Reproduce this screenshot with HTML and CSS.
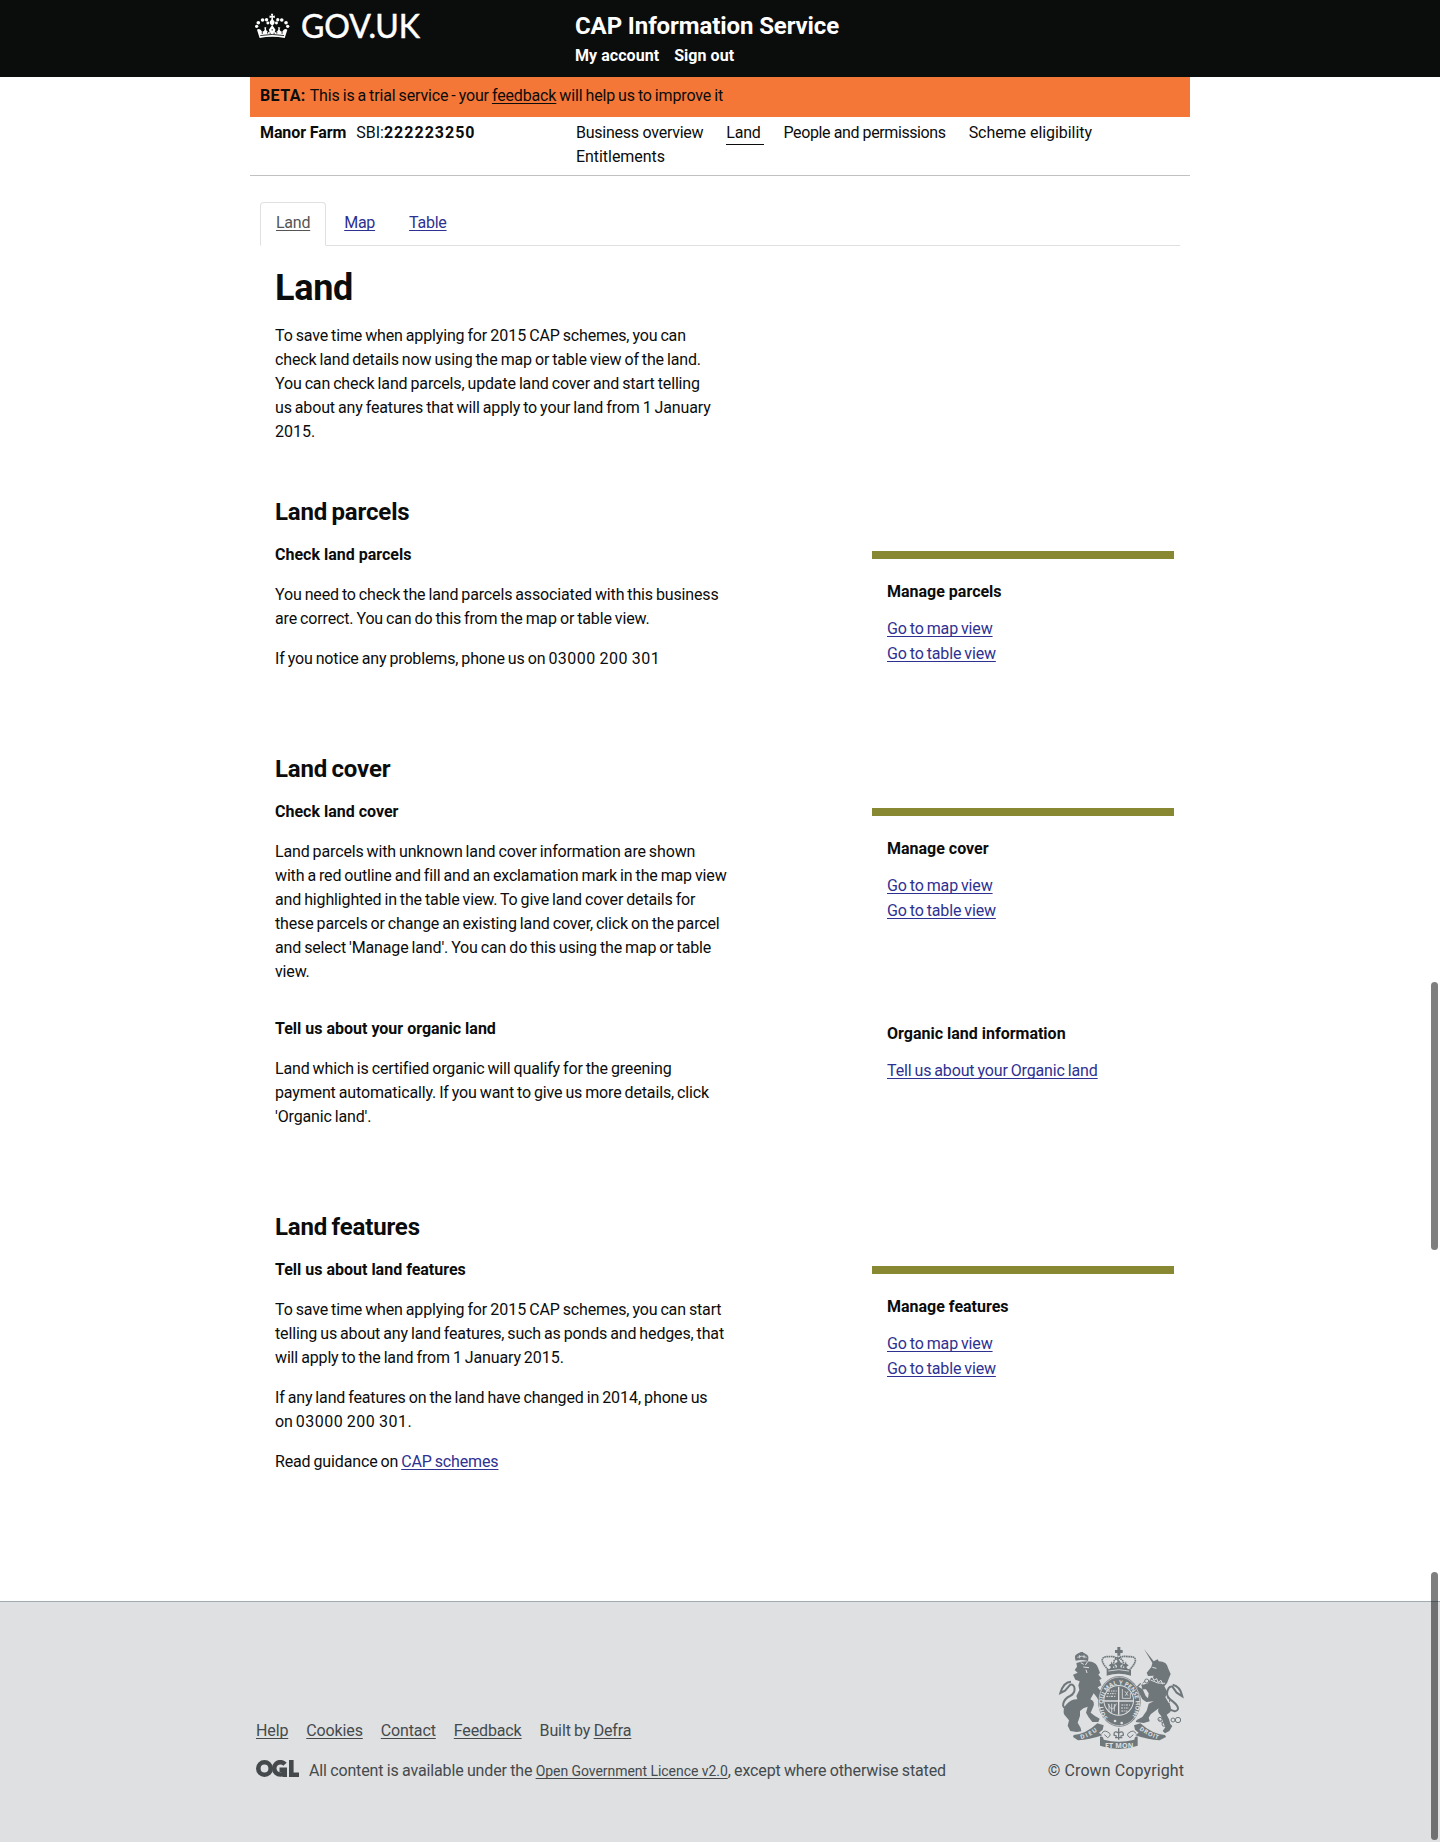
FILE: index.html
```html
<!DOCTYPE html>
<html lang="en">
<head>
<meta charset="utf-8">
<title>Land - CAP Information Service</title>
<link rel="stylesheet" href="styles.css">
</head>
<body>
<header class="top">
  <div class="top-inner">
    <a class="brand" href="#">
      <svg class="crown" viewBox="46 40 106 78" aria-hidden="true">
        <g fill="#fff">
          <path d="M52 90 Q60 84 66 94 Q72 100 76 88 L73 84 L80 82 L79 88 Q82 100 90 97 L88 90 L92 84 L98 76 L104 84 L108 90 L106 97 Q114 100 117 88 L116 82 L123 84 L120 88 Q124 100 130 94 Q136 84 144 90 L136 115 Q98 108 60 115Z"/>
          <path d="M94 42 h7 l-1 7 6 -2 v8 l-6 -2 1 8 q7 4 3 12 l-6 5 -6 -5 q-4 -8 3 -12 l1 -8 -6 2 v-8 l6 2z"/>
          <circle cx="81" cy="60" r="5"/><circle cx="69" cy="61" r="5.500"/><circle cx="56" cy="69" r="5.500"/><circle cx="51" cy="80" r="5"/><circle cx="85" cy="70" r="4.500"/>
          <circle cx="115" cy="60" r="5"/><circle cx="127" cy="61" r="5.500"/><circle cx="140" cy="69" r="5.500"/><circle cx="145" cy="80" r="5"/><circle cx="111" cy="70" r="4.500"/>
        </g>
        <g fill="none" stroke="#0b0c0c" stroke-width="2.500">
          <path d="M62 108 Q98 101 134 108"/><path d="M68 95 v8 M84 97 v5 M98 88 v5 M112 97 v5 M128 95 v8 M90 101 h4 M102 101 h4"/>
        </g>
      </svg>
      <svg class="wordmark" viewBox="0 0 120 28" aria-label="GOV.UK"><text x="0" y="25" textLength="119">GOV.UK</text></svg>
    </a>
    <div class="service">
      <div class="service-name">CAP Information Service</div>
      <nav class="account"><a href="#">My account</a><a href="#">Sign out</a></nav>
    </div>
  </div>
</header>

<div class="wrap">
  <div class="beta"><b>BETA:</b> <span>This is a trial service - your <a href="#">feedback</a> will help us to improve it</span></div>
  <div class="business">
    <div class="who"><b class="farm">Manor Farm</b><span class="sbi">SBI:<b>222223250</b></span></div>
    <nav class="sections">
      <a href="#">Business overview</a><a href="#" class="current">Land</a><a href="#" class="people">People and permissions</a><a href="#" class="wide">Scheme eligibility</a><a href="#" class="wide">Entitlements</a>
    </nav>
  </div>

  <nav class="tabs"><a class="tab active" href="#">Land</a><a class="tab" href="#">Map</a><a class="tab" href="#">Table</a></nav>

  <main class="content">
    <h1>Land</h1>
    <p>To save time when applying for <span class="year">2015</span> CAP schemes, you can<br>check land details now using the map or table view of the land.<br>You can check land parcels, update land cover and start telling<br>us about any features that will apply to your land from 1 January<br><span class="year">2015.</span></p>

    <section class="topic first">
      <h2>Land parcels</h2>
      <div class="cols">
        <div class="copy">
          <h3>Check land parcels</h3>
          <p>You need to check the land parcels associated with this business<br>are correct. You can do this from the map or table view.</p>
          <p>If you notice any problems, phone us on <span class="phone">03000 200 301</span></p>
        </div>
        <aside class="side">
          <h4>Manage parcels</h4>
          <ul><li><a href="#">Go to map view</a></li><li><a href="#">Go to table view</a></li></ul>
        </aside>
      </div>
    </section>

    <section class="topic">
      <h2>Land cover</h2>
      <div class="cols">
        <div class="copy">
          <h3>Check land cover</h3>
          <p>Land parcels with unknown land cover information are shown<br>with a red outline and fill and an exclamation mark in the map view<br>and highlighted in the table view. To give land cover details for<br>these parcels or change an existing land cover, click on the parcel<br>and select 'Manage land'. You can do this using the map or table<br>view.</p>
          <h3 class="second">Tell us about your organic land</h3>
          <p>Land which is certified organic will qualify for the greening<br>payment automatically. If you want to give us more details, click<br>'Organic land'.</p>
        </div>
        <aside class="side">
          <h4>Manage cover</h4>
          <ul><li><a href="#">Go to map view</a></li><li><a href="#">Go to table view</a></li></ul>
          <h4 class="lower">Organic land information</h4>
          <ul><li><a href="#">Tell us about your Organic land</a></li></ul>
        </aside>
      </div>
    </section>

    <section class="topic">
      <h2>Land features</h2>
      <div class="cols">
        <div class="copy">
          <h3>Tell us about land features</h3>
          <p>To save time when applying for <span class="year">2015</span> CAP schemes, you can start<br>telling us about any land features, such as ponds and hedges, that<br>will apply to the land from 1 January <span class="year">2015.</span></p>
          <p>If any land features on the land have changed in <span class="year">2014</span>, phone us<br>on <span class="phone">03000 200 301.</span></p>
          <p>Read guidance on <a href="#">CAP schemes</a></p>
        </div>
        <aside class="side">
          <h4>Manage features</h4>
          <ul><li><a href="#">Go to map view</a></li><li><a href="#">Go to table view</a></li></ul>
        </aside>
      </div>
    </section>
  </main>
</div>

<footer class="footer">
  <div class="footer-inner">
    <div class="footer-main">
      <div class="links"><a href="#">Help</a><a href="#">Cookies</a><a href="#">Contact</a><a href="#">Feedback</a><span>Built by <a href="#">Defra</a></span></div>
      <div class="licence">
        <svg class="ogl" viewBox="0 0 43 17" aria-hidden="true"><g fill="none" stroke="#45494b" stroke-width="4.600"><circle cx="8.500" cy="8.500" r="6.200"/><path d="M29 4.200 A6.200 6.200 0 1 0 29 12.500"/><path d="M23.500 9.800 H28.700 V17"/><path d="M35.300 0 V14.700 H43"/></g></svg>
        <span>All content is available under the <a href="#">Open Government Licence v2.0</a>, except where otherwise stated</span>
      </div>
    </div>
    <div class="crown-copy">
      <svg class="arms" viewBox="87 48 377 312" aria-hidden="true">
        <g fill="#6f777b">
          <!-- lion -->
          <path d="M140 92 Q134 76 144 72 Q158 62 170 72 Q182 76 177 93 Q158 88 140 92Z"/>
          <path d="M154 66 h8 v8 h-8z"/>
          <path d="M142 99 Q160 92 188 95 Q203 99 207 113 L213 128 208 134 218 146 211 150 217 166 206 172 220 190 Q225 207 216 225 L209 212 Q203 200 194 190 L184 208 Q200 214 192 232 L185 248 Q199 260 212 266 L208 276 190 276 179 262 171 248 176 230 163 235 153 243 153 257 146 278 155 294 157 304 143 306 124 303 116 287 120 271 105 253 Q101 235 111 224 Q127 207 145 208 L142 198 151 180 148 166 152 154 139 149 132 134 146 128 137 120 144 110Z"/>
          <!-- unicorn -->
          <path d="M345 57 L374 94 386 88 389 94 Q414 94 418 116 L425 132 420 144 Q416 160 406 169 L415 186 409 202 417 215 Q430 232 424 246 L413 254 420 268 424 282 430 288 421 303 408 310 401 303 409 292 402 276 396 257 Q383 246 389 235 L365 253 359 263 362 274 344 279 320 276 323 270 340 261 353 242 359 221 374 214 352 216 340 208 333 194 324 176 328 170 341 178 350 198 357 205 359 190 351 178 342 178 337 166 357 160 365 145 376 137 357 138 353 128 367 111 370 99Z"/>
          <!-- ribbon -->
          <path d="M134 315 Q170 313 205 280 L224 286 221 299 210 308 220 316 Q180 330 147 331 L132 321Z"/>
          <path d="M408 315 Q370 313 334 280 L315 286 318 299 329 308 319 316 Q359 330 392 331 L411 321Z"/>
          <path d="M213 320 Q223 318 224 329 Q269 341 316 329 Q317 318 326 320 L326 347 Q270 367 213 347Z"/>
          <!-- royal crown -->
          <path d="M265 51 h9 v9 h7 v9 h-7 v8 h-9 v-8 h-7 v-9 h7z"/>
          <path d="M233 119 Q269 106 306 119 L306 137 Q269 126 233 137Z"/>
          <path d="M241 119 l5-8-7-5 7-5 1-7 4 8 8 3-7 5 1 7 10-3 1-7-8-6 8-4 5-10 5 10 8 4-8 6 1 7 10 3 1-7-7-5 8-3 4-8 1 7 7 5-7 5 5 8z"/>
        </g>
        <g fill="none" stroke="#6f777b">
          <path d="M237 119 C213 94 214 78 240 80 Q258 77 266 89 Q274 76 298 80 C326 78 325 95 302 119 M259 113 Q246 93 267 82 Q292 93 279 113" stroke-width="5" stroke-dasharray="5 1.500"/>
          <path d="M119 235 C91 238 102 208 123 198 C144 187 138 160 124 164 L108 182 L94 189 Q104 155 126 155" stroke-width="6"/>
          <path d="M418 235 Q442 251 447 237 C449 218 414 211 414 191 Q416 168 430 170 L443 188 L460 199 Q454 169 431 164" stroke-width="6"/>
          <path d="M221 186 L230 177 M319 177 L335 160" stroke-width="4"/>
          <path d="M342 178 Q334 158 350 154 M414 203 Q432 211 410 238 M390 268 Q400 285 420 277" stroke-width="3" stroke-dasharray="7 3"/>
          <circle cx="353" cy="153" r="6" stroke-width="3"/><circle cx="393" cy="268" r="6" stroke-width="3"/><circle cx="406" cy="282" r="7" stroke-width="3"/><circle cx="432" cy="270" r="6" stroke-width="3"/><circle cx="447" cy="270" r="8" stroke-width="3"/><circle cx="409" cy="240" r="8" stroke-width="3"/>
          <path d="M218 311 Q224 299 236 306 Q251 314 236 323 L226 314 M321 311 Q315 299 303 306 Q288 314 303 323 L313 314" stroke-width="3"/>
          <path d="M269 295 V329 M269 309 Q254 300 255 315 L264 319 M269 309 Q284 300 283 315 L274 319 M258 323 H280" stroke-width="4"/>
        </g>
        <!-- garter and shield -->
        <ellipse cx="271" cy="214" rx="64" ry="76" fill="#6f777b"/>
        <ellipse cx="271" cy="214" rx="61" ry="73" fill="none" stroke="#dee0e2" stroke-width="2"/>
        <circle cx="269" cy="211" r="46" fill="#dee0e2"/>
        <circle cx="269" cy="211" r="43" fill="#6f777b"/>
        <g stroke="#dee0e2" fill="none">
          <path d="M269 170 V254 M226 213 H312" stroke-width="4"/>
          <path d="M237 183 h26 M234 191 h28 M232 199 h29 M277 225 h27 M276 234 h24 M277 243 h18" stroke-width="3" stroke-dasharray="6 3 3 2"/>
          <path d="M280 177 V205 H304 V189 M288 184 l9 13 M297 184 l-8 13 M240 222 v24 M248 221 v27 M256 222 v22 M237 221 q12 32 25 0" stroke-width="2.500"/>
          <path d="M155 98 L164 103 M176 95 L169 105 M163 111 l17 2 M171 119 l3 10 M365 150 Q386 163 408 160 M370 141 l5 10 8-5 4 11 9-6 5 12 M370 112 l12 3" stroke-width="3"/>
          <path d="M145 82 Q158 75 173 82 M152 75 v10 M165 75 v10 M238 123 Q269 115 300 123" stroke-width="2.500"/>
        </g>
        <g fill="#dee0e2" class="motto">
          <defs><path id="ring" d="M236 264 A49 59 0 1 1 306 264"/><path id="left" d="M156 328 Q184 320 208 301"/><path id="right" d="M330 299 Q356 319 388 328"/></defs>
          <text font-size="18"><textPath href="#ring" textLength="252">SOIT QUI MAL Y PENSE HONI</textPath></text>
          <text font-size="18"><textPath href="#left" textLength="56">DIEU</textPath></text>
          <text font-size="18"><textPath href="#right" textLength="64">DROIT</textPath></text>
          <text x="228" y="354" font-size="21" textLength="85">ET MON</text>
          <circle cx="258" cy="273" r="4"/><circle cx="278" cy="279" r="4"/>
        </g>
      </svg>
      <span>© Crown Copyright</span>
    </div>
  </div>
</footer>
<div class="scroll scroll-a"></div>
<div class="scroll scroll-b"></div>
</body>
</html>
```
FILE: styles.css
```css
* { box-sizing: border-box; }
body { margin: 0; position: relative; height: 1842px; overflow: hidden; font: 16px/24px Roboto, "Liberation Sans", sans-serif; color: #0b0c0c; background: #fff; }
h1, h2, h3, h4, p, ul { margin: 0; padding: 0; }
ul { list-style: none; }
a { color: #2e3191; text-underline-offset: 2px; text-decoration-thickness: 1px; text-decoration-skip-ink: none; }
p, li, .beta span { letter-spacing: -.145px; word-spacing: -.8px; }
.year { letter-spacing: 0; }
.phone { letter-spacing: .5px; word-spacing: -.8px; }

.top { height: 77px; background: #0b0c0c; color: #fff; }
.top-inner { width: 930px; margin: 0 auto; display: flex; }
.brand { display: flex; width: 320px; padding-top: 13px; }
.crown { width: 35px; height: 26px; }
.wordmark { width: 120px; height: 28px; margin: 0 0 0 11px; overflow: visible; }
.wordmark text { font: 32px Lato, sans-serif; fill: #fff; stroke: #fff; stroke-width: .5px; }
.service-name { font-size: 24px; font-weight: 700; line-height: 30px; padding-top: 11px; letter-spacing: -.1px; }
.account { display: flex; gap: 15px; padding-top: 3px; font-weight: 700; letter-spacing: .05px; }
.account a { color: #fff; text-decoration: none; }

.wrap { width: 940px; margin: 0 auto; }
.beta { height: 40px; padding: 7px 10px; background: #f47738; }
.beta b { letter-spacing: .4px; }
.beta a { color: #0b0c0c; }
.business { display: flex; height: 59px; padding: 4px 10px 0; border-bottom: 1px solid #bfc1c3; }
.who { width: 316px; display: flex; gap: 10px; }
.farm { letter-spacing: -.1px; }
.sbi b { letter-spacing: 1px; }
.sections { flex: 1; display: flex; flex-wrap: wrap; column-gap: 23px; align-content: flex-start; letter-spacing: -.25px; }
.sections a { height: 24px; color: #0b0c0c; text-decoration: none; }
.sections .people { letter-spacing: -.4px; }
.sections .wide { letter-spacing: -.05px; }
.sections .current { border-bottom: 1px solid #0b0c0c; padding-right: 3px; margin-right: -3px; }

.tabs { display: flex; gap: 2px; height: 44px; margin: 26px 10px 0; border-bottom: 1px solid #dee0e2; letter-spacing: -.25px; }
.tab { height: 44px; padding: 9px 16px; }
.tab.active { height: 44px; padding: 8px 15px; background: #fff; border: 1px solid #dee0e2; border-bottom-color: #fff; border-radius: 4px 4px 0 0; color: #555; }

.content { padding: 22px 16px 0 25px; }
h1 { font-size: 36px; line-height: 40px; margin-bottom: 16px; letter-spacing: -.3px; }
h2 { font-size: 24px; line-height: 30px; margin-bottom: 16px; letter-spacing: -.15px; word-spacing: -1.5px; }
h3, h4 { font-size: 16px; line-height: 24px; }
.topic { margin-top: 83px; }
.topic.first { margin-top: 53px; }
.cols { display: flex; justify-content: space-between; }
.copy { display: flex; flex-direction: column; gap: 16px; white-space: nowrap; }
.copy .second { margin-top: 17px; }
.side { width: 302px; margin-top: 8px; padding: 21px 15px 0; border-top: 8px solid #883; }
.side li { line-height: 25px; }
.side h4 { margin-bottom: 12px; }
.side .lower { margin-top: 99px; }

.footer { height: 241px; margin-top: 127px; background: #dee0e2; border-top: 1px solid #a1acb2; color: #454a4c; }
.footer a { color: #454a4c; }
.footer-inner { width: 928px; margin: 0 auto; display: flex; justify-content: space-between; }
.footer-main { padding-top: 117px; letter-spacing: -.13px; word-spacing: -.5px; }
.links { display: flex; gap: 18px; }
.licence { display: flex; gap: 10px; margin-top: 16px; white-space: nowrap; }
.licence a { font-size: 14px; letter-spacing: -.05px; word-spacing: 0; }
.ogl { width: 43px; height: 17px; margin-top: 1px; }
.crown-copy { display: flex; flex-direction: column; align-items: flex-end; padding-top: 44px; letter-spacing: .1px; }
.arms { width: 125.700px; height: 104px; margin-bottom: 9px; }
.motto text { font-family: "Open Sans", sans-serif; font-weight: 700; letter-spacing: 0; }

.scroll { position: absolute; left: 1431px; width: 7px; height: 268px; border-radius: 4px; background: rgba(0, 0, 0, .5); }
.scroll-a { top: 982px; }
.scroll-b { top: 1572px; }
```
